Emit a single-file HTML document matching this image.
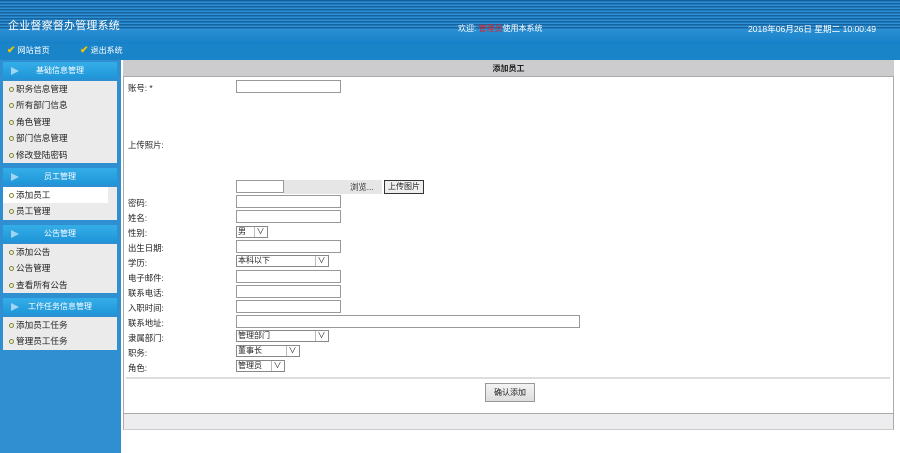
<!DOCTYPE html>
<html><head><meta charset="utf-8">
<style>
*{margin:0;padding:0;box-sizing:border-box}
body{width:900px;height:453px;overflow:hidden;background:#fff;font-family:"Liberation Sans","Noto Sans CJK SC",sans-serif;font-size:8px;color:#222;position:relative}
.a{position:absolute}
#hdr{left:0;top:0;width:900px;height:44px;background:repeating-linear-gradient(180deg,#15629f 0 1.5px,#2d90d4 1.5px 3px);}
#hdr2{left:0;top:30px;width:900px;height:14px;background:linear-gradient(180deg,#2a8fd3,#1680c8)}
#nav{left:0;top:44px;width:900px;height:16px;background:#1a84c9}
#side{left:0;top:60px;width:121px;height:393px;background:#2f8fd0}
.sh{position:absolute;left:3px;width:114px;height:17px;background:linear-gradient(180deg,#34aee8,#1f95d8);color:#fff;font-size:8px;line-height:17px;text-align:center}
.sh:before{content:"";position:absolute;left:8px;top:5px;border-left:8px solid #9fd4f2;border-top:4px solid transparent;border-bottom:4px solid transparent}
.sb{position:absolute;left:3px;width:114px;background:#ebebeb}
.it{height:16.4px;line-height:16px;padding-left:6px;font-size:8.6px;color:#222}
.it:before{content:"";display:inline-block;width:3px;height:3px;border:1.5px solid #7a8a20;border-radius:50%;margin-right:2px;vertical-align:0px}
#main{left:123px;top:60px;width:771px;height:370px;border-left:1px solid #aaa;border-right:1px solid #aaa;background:#fff}
#title{left:123px;top:60px;width:771px;height:17px;background:#cccbcd;border-bottom:1px solid #aaa;text-align:center;line-height:17px;font-weight:bold;font-size:8px}
.l{position:absolute;left:128px;font-size:8.4px}
.in{position:absolute;left:236px;width:105px;height:13px;border:1px solid #999;background:#fff}
.sel{position:absolute;left:236px;height:12px;border:1px solid #888;background:#fff;font-size:8px;line-height:10px;padding-left:1px}
.sel:after{content:"∨";position:absolute;right:1px;top:0;width:11px;height:10px;border-left:1px solid #bbb;text-align:center;font-size:8px;line-height:10px}
</style></head><body>
<div id="hdr" class="a"></div>
<div id="hdr2" class="a"></div>
<div class="a" style="left:8px;top:17px;color:#fff;font-size:11px;letter-spacing:0.2px">企业督察督办管理系统</div>
<div class="a" style="left:458px;top:23px;color:#fff;font-size:8px">欢迎: <span style="color:#d22">管理员</span>使用本系统</div>
<div class="a" style="left:748px;top:23px;color:#fff;font-size:8.6px">2018年06月26日 星期二 10:00:49</div>
<div id="nav" class="a"></div>
<div class="a" style="left:7px;top:45px;color:#fff;font-size:8px"><span style="color:#f5c400;font-weight:bold;font-size:10px">✔</span> 网站首页</div>
<div class="a" style="left:80px;top:45px;color:#fff;font-size:8px"><span style="color:#f5c400;font-weight:bold;font-size:10px">✔</span> 退出系统</div>
<div id="side" class="a"></div>
<div class="sh" style="top:62px">基础信息管理</div>
<div class="sb" style="top:81px;height:82px;padding-top:0">
<div class="it">职务信息管理</div><div class="it">所有部门信息</div><div class="it">角色管理</div><div class="it">部门信息管理</div><div class="it">修改登陆密码</div></div>
<div class="sh" style="top:168px">员工管理</div>
<div class="sb" style="top:187px;height:33px"><div class="it" style="background:#fff;width:105px">添加员工</div><div class="it">员工管理</div></div>
<div class="sh" style="top:225px">公告管理</div>
<div class="sb" style="top:244px;height:49px"><div class="it">添加公告</div><div class="it">公告管理</div><div class="it">查看所有公告</div></div>
<div class="sh" style="top:298px">工作任务信息管理</div>
<div class="sb" style="top:317px;height:33px"><div class="it">添加员工任务</div><div class="it">管理员工任务</div></div>

<div id="main" class="a"></div>
<div id="title" class="a">添加员工</div>
<div class="l" style="top:82px">账号: *</div><div class="in" style="top:80px"></div>
<div class="l" style="top:139px">上传照片:</div>
<div class="in" style="top:180px;width:48px"></div>
<div class="a" style="left:284px;top:180px;width:98px;height:14px;background:#e6e6e6"></div>
<div class="a" style="left:350px;top:181px;font-size:8.4px;color:#333">浏览...</div>
<div class="a" style="left:384px;top:180px;width:40px;height:14px;border:1px solid #333;background:#eee;font-size:8px;text-align:center;line-height:12px">上传图片</div>
<div class="l" style="top:197px">密码:</div><div class="in" style="top:195px"></div>
<div class="l" style="top:212px">姓名:</div><div class="in" style="top:210px"></div>
<div class="l" style="top:227px">性别:</div><div class="sel" style="top:226px;width:32px">男</div>
<div class="l" style="top:242px">出生日期:</div><div class="in" style="top:240px"></div>
<div class="l" style="top:257px">学历:</div><div class="sel" style="top:255px;width:93px">本科以下</div>
<div class="l" style="top:272px">电子邮件:</div><div class="in" style="top:270px"></div>
<div class="l" style="top:287px">联系电话:</div><div class="in" style="top:285px"></div>
<div class="l" style="top:302px">入职时间:</div><div class="in" style="top:300px"></div>
<div class="l" style="top:317px">联系地址:</div><div class="in" style="top:315px;width:344px"></div>
<div class="l" style="top:332px">隶属部门:</div><div class="sel" style="top:330px;width:93px">管理部门</div>
<div class="l" style="top:347px">职务:</div><div class="sel" style="top:345px;width:64px">董事长</div>
<div class="l" style="top:362px">角色:</div><div class="sel" style="top:360px;width:49px">管理员</div>
<div class="a" style="left:126px;top:377px;width:764px;height:2px;background:#ddd"></div>
<div class="a" style="left:485px;top:383px;width:50px;height:19px;border:1px solid #999;background:linear-gradient(#f4f4f4,#ddd);font-size:8px;text-align:center;line-height:17px">确认添加</div>
<div class="a" style="left:123px;top:413px;width:771px;height:17px;background:#ededef;border-top:1px solid #aaa;border-left:1px solid #aaa;border-right:1px solid #aaa;border-bottom:1px solid #ccc"></div>
</body></html>
